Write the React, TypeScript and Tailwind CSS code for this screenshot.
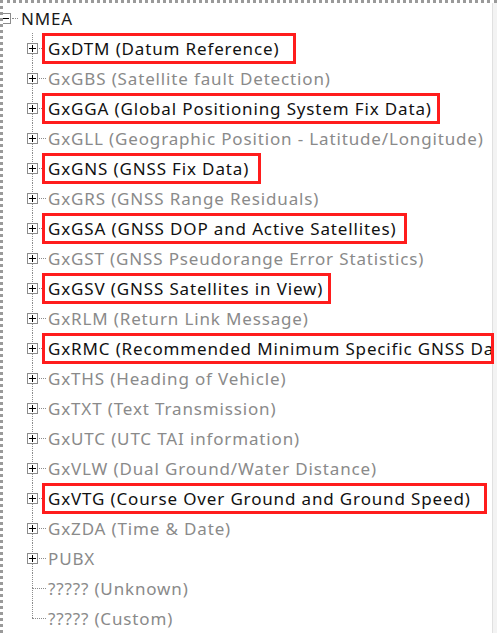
import React from "react";

type Item = { label: string; hl?: number; leaf?: boolean };

const items: Item[] = [
  { label: "GxDTM (Datum Reference)", hl: 254 },
  { label: "GxGBS (Satellite fault Detection)" },
  { label: "GxGGA (Global Positioning System Fix Data)", hl: 398 },
  { label: "GxGLL (Geographic Position - Latitude/Longitude)" },
  { label: "GxGNS (GNSS Fix Data)", hl: 219 },
  { label: "GxGRS (GNSS Range Residuals)" },
  { label: "GxGSA (GNSS DOP and Active Satellites)", hl: 365 },
  { label: "GxGST (GNSS Pseudorange Error Statistics)" },
  { label: "GxGSV (GNSS Satellites in View)", hl: 289 },
  { label: "GxRLM (Return Link Message)" },
  { label: "GxRMC (Recommended Minimum Specific GNSS Data)", hl: 452 },
  { label: "GxTHS (Heading of Vehicle)" },
  { label: "GxTXT (Text Transmission)" },
  { label: "GxUTC (UTC TAI information)" },
  { label: "GxVLW (Dual Ground/Water Distance)" },
  { label: "GxVTG (Course Over Ground and Ground Speed)", hl: 445 },
  { label: "GxZDA (Time & Date)" },
  { label: "PUBX" },
  { label: "????? (Unknown)", leaf: true },
  { label: "????? (Custom)", leaf: true },
];

function Box({ minus }: { minus?: boolean }) {
  return (
    <div className="w-[11px] h-[11px] border border-[#8c8c8c] bg-white flex items-center justify-center">
      <div className="relative w-[7px] h-[7px] flex items-center justify-center">
        <div className="w-[7px] h-px bg-black" />
        {!minus && <div className="absolute top-0 bottom-0 left-[3px] w-px bg-black" />}
      </div>
    </div>
  );
}

export default function App() {
  return (
    <div
      className="relative w-[497px] h-[633px] overflow-hidden bg-white text-[17px] leading-none tracking-[0.85px] border-t-[3px] border-l-[3px] border-dotted border-[#9a9a9a] flex"
      style={{ fontFamily: '"Noto Sans", "Open Sans", sans-serif' }}
    >
      <div className="flex-1 min-w-0 flex flex-col ml-[-3px]">
        {/* root */}
        <div className="flex h-[30px] items-center">
          <div className="w-[21px] h-full shrink-0 flex items-center">
            <Box minus />
            <div className="w-[6px] ml-[1px] border-t border-dotted border-[#8c8c8c]" />
          </div>
          <span className="text-[#1a1a1a]">NMEA</span>
        </div>

        {items.map((it, i) => {
          const last = i === items.length - 1;
          return (
            <div key={i} className="flex h-[30px]">
              <div className="relative w-[42px] h-full shrink-0 pl-[32px] flex flex-col">
                <div className="h-[15px] border-l border-dotted border-[#8c8c8c]" />
                <div
                  className={`h-[15px] w-[14px] border-t border-dotted border-[#8c8c8c] ${last ? "" : "border-l"}`}
                />
                {!it.leaf && (
                  <div className="absolute left-[27px] top-[10px]">
                    <Box />
                  </div>
                )}
              </div>
              {it.hl ? (
                <div
                  className="relative z-10 shrink-0 h-[31px] border-[3px] border-[#ff1c1c] bg-white flex items-center pl-[3px] overflow-hidden whitespace-nowrap text-[#111]"
                  style={{ width: it.hl }}
                >
                  {it.label}
                </div>
              ) : (
                <div className="h-[30px] flex items-center pl-[6px] whitespace-nowrap text-[#8a8a8a]">
                  {it.label}
                </div>
              )}
            </div>
          );
        })}
      </div>
      <div className="w-[5px] shrink-0 bg-[#f3f3f3] border-l border-[#e0e0e0]" />
    </div>
  );
}
